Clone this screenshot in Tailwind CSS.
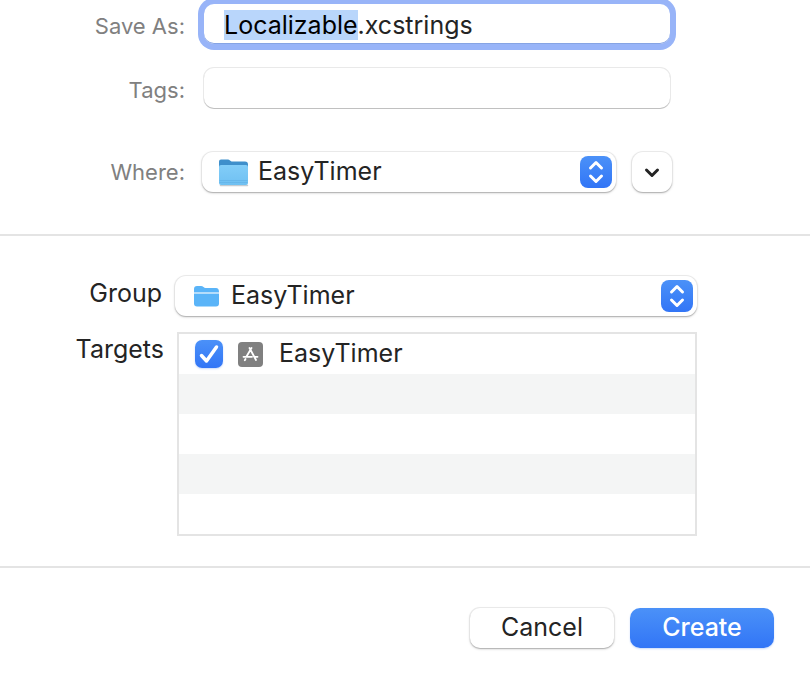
<!DOCTYPE html>
<html lang="en">
<head>
    <meta charset="UTF-8">
    <meta name="viewport" content="width=device-width, initial-scale=1.0">
    <title>Save Localizable.xcstrings</title>
    <script src="https://cdn.jsdelivr.net/npm/@tailwindcss/browser@4"></script>
</head>
<body class="bg-white text-[#242424] font-['Inter','Liberation_Sans',sans-serif] text-[25px] leading-8">
    <form>
        <!-- File name, tags and location -->
        <section class="pt-1 pb-[42px] pr-[138px] border-b-2 border-[#e4e4e4]">
            <div class="flex items-center pr-0.5">
                <label for="name" class="w-[185px] mr-[19px] pt-1 text-right text-[22px] text-[#808080]">Save As:</label>
                <input id="name" type="text" value="Localizable.xcstrings" autofocus class="flex-1 min-w-0 h-10 px-5 pt-0.5 rounded-[10px] bg-white text-[#242424] outline-none ring-[6px] ring-[#98b4f8] inset-shadow-[0_-1px_0_#86a4e4] selection:bg-[#b9d6fb] selection:text-black">
            </div>
            <div class="flex items-center mt-6 pr-0.5">
                <label for="tags" class="w-[185px] mr-[19px] pt-1 text-right text-[22px] text-[#808080]">Tags:</label>
                <input id="tags" type="text" class="flex-1 min-w-0 h-10 px-5 rounded-[10px] bg-white outline-none shadow-[0_1px_0_#c0c0c0,0_0_0_1px_#e9e9e9]">
            </div>
            <div class="flex items-center mt-11">
                <label for="where" class="w-[185px] mr-[17px] text-right text-[22px] text-[#808080]">Where:</label>
                <div class="relative flex-1 min-w-0">
                    <select id="where" class="block w-full h-10 pl-14 pb-0.5 appearance-none rounded-[11px] bg-white outline-none shadow-[0_1px_1px_#b4b4b4,0_0_0_1px_#e9e9e9,0_1px_3px_#d4d4d4]">
                        <option>EasyTimer</option>
                    </select>
                    <svg class="absolute left-4 top-1.5 pointer-events-none" width="32" height="30" viewBox="0 0 32 30">
                        <defs>
                            <linearGradient id="folder" x1="0" y1="0" x2="0" y2="1">
                                <stop offset="0" stop-color="#82cdf8"/>
                                <stop offset="1" stop-color="#6fc0f2"/>
                            </linearGradient>
                        </defs>
                        <path d="M2.500 27.500h27" stroke="#c4ccd2" stroke-width="1.500" stroke-linecap="round"/>
                        <path d="M1 3.500q0-2 2-2h7q1 0 2 1l1.500 1h13.500q3 0 3 3V12H1z" fill="#3f8fcb"/>
                        <path d="M1 9q0-2 2-2h25q2 0 2 2v16q0 2-2 2H3q-2 0-2-2z" fill="url(#folder)"/>
                        <path d="M1.500 22.500h28M1.500 24.500h28" stroke="#62b2e6" stroke-width=".7"/>
                    </svg>
                    <svg class="absolute right-1 top-1 pointer-events-none rounded-lg bg-linear-to-b from-[#4b91f8] to-[#3275f6]" width="32" height="32" viewBox="0 0 32 32" fill="none" stroke="#fff" stroke-width="3" stroke-linecap="round" stroke-linejoin="round">
                        <path d="M10.500 12l5.500-5.500 5.500 5.500M10.500 20l5.500 5.500 5.500-5.500"/>
                    </svg>
                </div>
                <button type="button" aria-label="Show more" class="ml-4 size-10 flex items-center justify-center rounded-[11px] bg-white shadow-[0_1px_1px_#b4b4b4,0_0_0_1px_#e9e9e9,0_1px_3px_#d4d4d4]">
                    <svg width="20" height="20" viewBox="0 0 20 20" fill="none" stroke="#242424" stroke-width="3" stroke-linecap="round" stroke-linejoin="round">
                        <path d="M4.500 8l5.500 5.500L15.500 8"/>
                    </svg>
                </button>
            </div>
        </section>

        <!-- Project group and target membership -->
        <section class="pt-10 pb-[30px] pr-[113px] border-b-2 border-[#e4e4e4]">
            <div class="flex items-center">
                <label for="group" class="w-[162px] mr-[13px] pb-1.5 text-right">Group</label>
                <div class="relative flex-1 min-w-0">
                    <select id="group" class="block w-full h-10 pl-14 pb-0.5 appearance-none rounded-[11px] bg-white outline-none shadow-[0_1px_1px_#b4b4b4,0_0_0_1px_#e9e9e9,0_1px_3px_#d4d4d4]">
                        <option>EasyTimer</option>
                    </select>
                    <svg class="absolute left-[19px] top-2.5 pointer-events-none" width="26" height="22" viewBox="0 0 26 22">
                        <path d="M0 6V3q0-3 3-3h4q1.500 0 2.500 1t2 1h10.500q3 0 3 4z" fill="#5ab4f8"/>
                        <path d="M0 8h25v9.500q0 3-3 3H3q-3 0-3-3z" fill="#5ab4f8"/>
                        <path d="M0 7h25" stroke="#b5ddfb" stroke-width="2"/>
                    </svg>
                    <svg class="absolute right-1 top-1 pointer-events-none rounded-lg bg-linear-to-b from-[#4b91f8] to-[#3275f6]" width="32" height="32" viewBox="0 0 32 32" fill="none" stroke="#fff" stroke-width="3" stroke-linecap="round" stroke-linejoin="round">
                        <path d="M10.500 12l5.500-5.500 5.500 5.500M10.500 20l5.500 5.500 5.500-5.500"/>
                    </svg>
                </div>
            </div>
            <div class="flex mt-4">
                <span id="targets" class="w-[164px] mr-[13px] pt-px text-right">Targets</span>
                <ul aria-labelledby="targets" class="flex-1 min-w-0 border-2 border-[#e4e4e4]">
                    <li class="h-10">
                        <label class="flex items-center h-full pl-4">
                            <span class="relative size-7">
                                <input type="checkbox" checked class="block size-7 appearance-none rounded-[7px] bg-linear-to-b from-[#4b91f8] to-[#3275f6] shadow-[0_1px_2px_#c9dafa]">
                                <svg class="absolute inset-0 pointer-events-none" width="28" height="28" viewBox="0 0 28 28" fill="none" stroke="#fff" stroke-width="3.500" stroke-linecap="round" stroke-linejoin="round">
                                    <path d="M6.500 15.500l5 5.500L21.500 7"/>
                                </svg>
                            </span>
                            <svg class="ml-[15px] mr-4" width="25" height="25" viewBox="0 0 25 25" fill="none" stroke="#fff" stroke-width="1.800" stroke-linecap="round">
                                <rect width="25" height="25" rx="4" fill="#808080" stroke="none"/>
                                <path d="M11.500 6l6.500 12M13.500 6l-5 8.500M7.500 17l-.7 1.200M5.500 14.800h8.500M17 14.800h2.500"/>
                            </svg>
                            <span class="pb-0.5">EasyTimer</span>
                        </label>
                    </li>
                    <li class="h-10 bg-[#f4f5f5]"></li>
                    <li class="h-10"></li>
                    <li class="h-10 bg-[#f4f5f5]"></li>
                    <li class="h-10"></li>
                </ul>
            </div>
        </section>

        <footer class="flex justify-end gap-4 pt-10 pb-8 pr-9">
            <button type="button" class="w-36 h-10 pb-0.5 rounded-[10px] bg-white shadow-[0_1px_1px_#b4b4b4,0_0_0_1px_#e9e9e9,0_1px_3px_#d4d4d4]">Cancel</button>
            <button type="submit" class="w-36 h-10 pb-0.5 rounded-[10px] font-medium text-white bg-linear-to-b from-[#4b91f8] to-[#3275f6] shadow-[0_1px_2px_#c9dafa]">Create</button>
        </footer>
    </form>
    <script>
        // Preselect the base name so typing keeps the extension
        var nameField = document.getElementById('name');
        nameField.focus();
        nameField.setSelectionRange(0, nameField.value.lastIndexOf('.'));
    </script>
</body>
</html>
